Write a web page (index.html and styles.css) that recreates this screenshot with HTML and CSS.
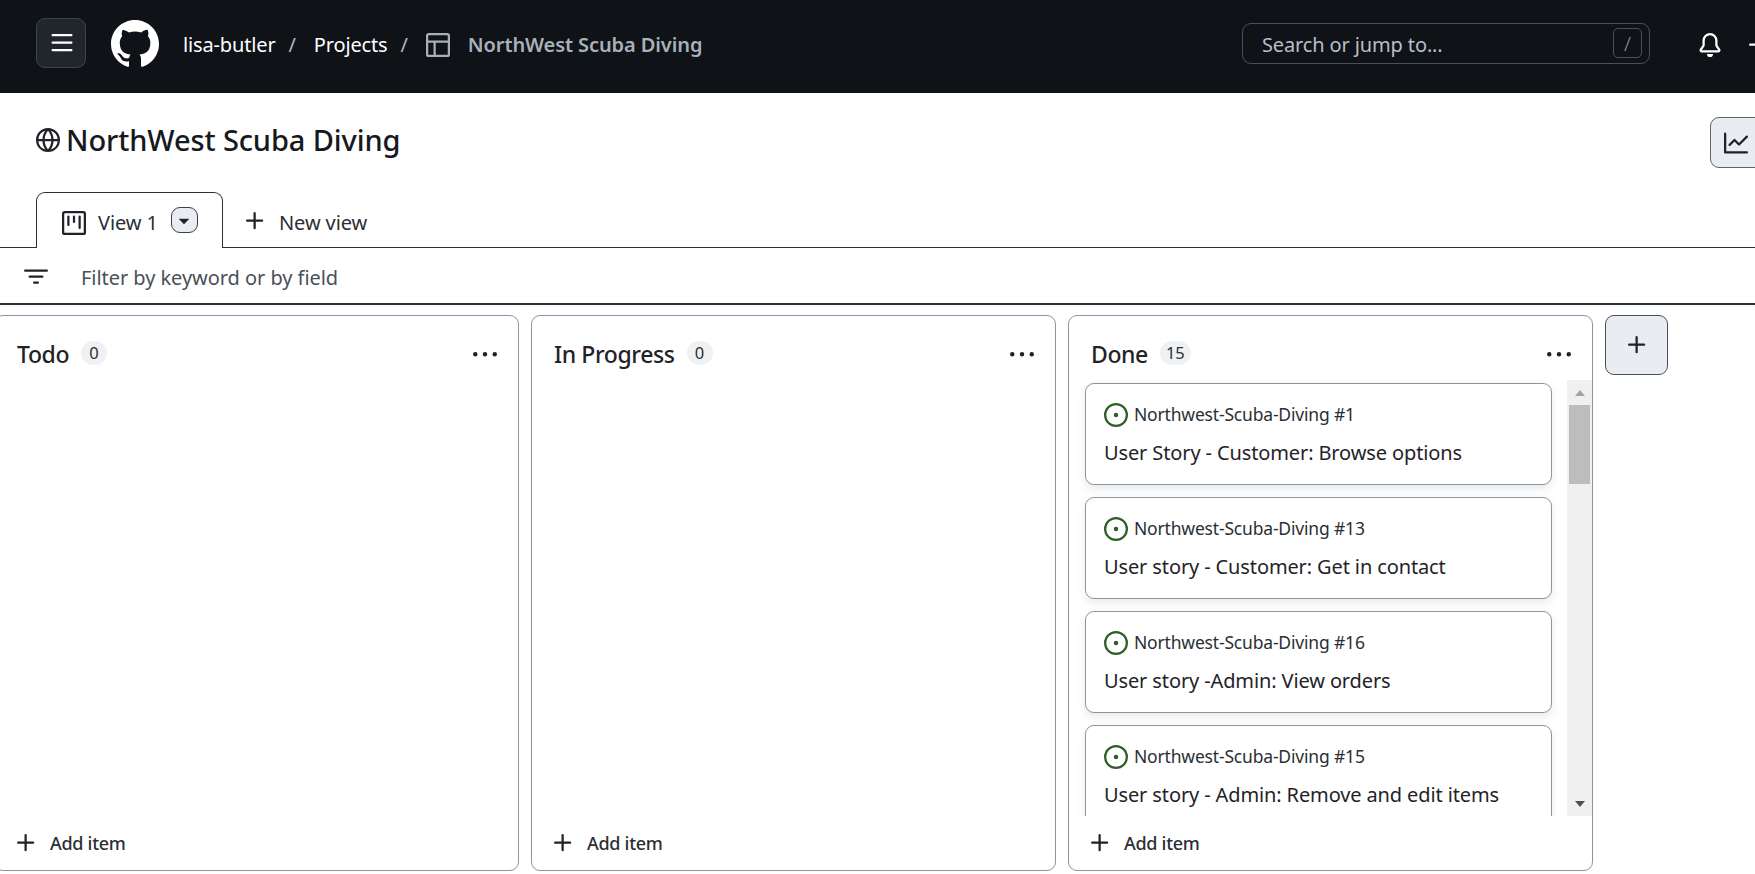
FILE: index.html
```html
<!DOCTYPE html>
<html lang="en">
<head>
<meta charset="utf-8">
<title>NorthWest Scuba Diving</title>
<link rel="stylesheet" href="styles.css">
</head>
<body>
<header class="topnav">
  <button class="menu-btn"><svg class="i24" viewBox="0 0 16 16"><path d="M1 2.75A.75.75 0 0 1 1.75 2h12.5a.75.75 0 0 1 0 1.5H1.75A.75.75 0 0 1 1 2.75Zm0 5A.75.75 0 0 1 1.75 7h12.5a.75.75 0 0 1 0 1.5H1.75A.75.75 0 0 1 1 7.75ZM1.75 12h12.5a.75.75 0 0 1 0 1.5H1.75a.75.75 0 0 1 0-1.5Z"/></svg></button>
  <svg class="logo" viewBox="0 0 16 16"><path d="M8 0c4.42 0 8 3.58 8 8a8.013 8.013 0 0 1-5.45 7.59c-.4.08-.55-.17-.55-.38 0-.27.01-1.13.01-2.2 0-.75-.25-1.23-.54-1.48 1.78-.2 3.65-.88 3.65-3.95 0-.88-.31-1.59-.82-2.15.08-.2.36-1.02-.08-2.12 0 0-.67-.22-2.2.82-.64-.18-1.32-.27-2-.27-.68 0-1.36.09-2 .27-1.53-1.03-2.2-.82-2.2-.82-.44 1.1-.16 1.92-.08 2.12-.51.56-.82 1.28-.82 2.15 0 3.06 1.86 3.75 3.64 3.95-.23.2-.44.55-.51 1.07-.46.21-1.61.55-2.33-.66-.15-.24-.6-.83-1.23-.82-.67.01-.27.38.01.53.34.19.73.9.82 1.13.16.45.68 1.31 2.69.94 0 .67.01 1.3.01 1.49 0 .21-.15.45-.55.38A7.995 7.995 0 0 1 0 8c0-4.42 3.58-8 8-8Z"/></svg>
  <nav class="crumbs">
    <span class="crumb">lisa-butler</span>
    <span class="slash">/</span>
    <span class="crumb">Projects</span>
    <span class="slash">/</span>
    <svg class="i24 table-icon" viewBox="0 0 16 16"><path d="M0 1.75C0 .784.784 0 1.75 0h12.5C15.216 0 16 .784 16 1.75v12.5A1.75 1.75 0 0 1 14.25 16H1.75A1.75 1.75 0 0 1 0 14.25ZM6.5 6.5v8h7.75a.25.25 0 0 0 .25-.25V6.5Zm8-1.5V1.75a.25.25 0 0 0-.25-.25H1.75a.25.25 0 0 0-.25.25V5Zm-13 1.5v7.75c0 .138.112.25.25.25H5v-8Z"/></svg>
    <span class="crumb current">NorthWest Scuba Diving</span>
  </nav>
  <div class="search"><span class="search-text">Search or jump to...</span><kbd class="key">/</kbd></div>
  <svg class="i24 bell" viewBox="0 0 16 16"><path d="M8 16a2 2 0 0 0 1.985-1.75c.017-.137-.097-.25-.235-.25h-3.5c-.138 0-.252.113-.235.25A2 2 0 0 0 8 16ZM3 5a5 5 0 0 1 10 0v2.947c0 .05.015.098.042.139l1.703 2.555A1.519 1.519 0 0 1 13.482 13H2.518a1.516 1.516 0 0 1-1.263-2.36l1.703-2.554A.255.255 0 0 0 3 7.947Zm5-3.5A3.5 3.5 0 0 0 4.5 5v2.947c0 .346-.102.683-.294.97l-1.703 2.556a.017.017 0 0 0-.003.01l.001.006c0 .002.002.004.004.006l.006.004.007.001h10.964l.007-.001.006-.004.004-.006.001-.007a.017.017 0 0 0-.003-.01l-1.703-2.554a1.745 1.745 0 0 1-.294-.97V5A3.5 3.5 0 0 0 8 1.5Z"/></svg>
  <svg class="i24 nav-plus" viewBox="0 0 16 16"><path d="M7.75 2a.75.75 0 0 1 .75.75V7h4.25a.75.75 0 0 1 0 1.5H8.5v4.25a.75.75 0 0 1-1.5 0V8.5H2.75a.75.75 0 0 1 0-1.5H7V2.75A.75.75 0 0 1 7.75 2Z"/></svg>
</header>

<section class="project-head">
  <svg class="i24" viewBox="0 0 16 16"><path d="M8 0a8 8 0 1 1 0 16A8 8 0 0 1 8 0ZM5.78 8.75a9.64 9.64 0 0 0 1.363 4.177c.255.426.542.832.857 1.215.245-.296.551-.705.857-1.215A9.64 9.64 0 0 0 10.22 8.75Zm4.44-1.5a9.64 9.64 0 0 0-1.363-4.177c-.307-.51-.612-.919-.857-1.215a9.927 9.927 0 0 0-.857 1.215A9.64 9.64 0 0 0 5.78 7.25Zm-5.944 1.5H1.543a6.507 6.507 0 0 0 4.666 5.5c-.123-.181-.24-.365-.352-.552-.715-1.192-1.437-2.874-1.581-4.948Zm-2.733-1.5h2.733c.144-2.074.866-3.756 1.58-4.948.12-.197.237-.381.353-.552a6.507 6.507 0 0 0-4.666 5.5Zm10.181 1.5c-.144 2.074-.866 3.756-1.58 4.948-.12.197-.237.381-.353.552a6.507 6.507 0 0 0 4.666-5.5Zm2.733-1.5a6.507 6.507 0 0 0-4.666-5.5c.123.181.24.365.353.552.714 1.192 1.436 2.874 1.58 4.948Z"/></svg>
  <h1 class="title">NorthWest Scuba Diving</h1>
  <button class="chart-btn"><svg class="i24" viewBox="0 0 16 16"><path d="M1.5 1.75V13.5h13.75a.75.75 0 0 1 0 1.5H.75a.75.75 0 0 1-.75-.75V1.75a.75.75 0 0 1 1.5 0Zm14.28 2.53-5.25 5.25a.75.75 0 0 1-1.06 0L7 7.06 4.28 9.78a.751.751 0 0 1-1.042-.018.751.751 0 0 1-.018-1.042l3.25-3.25a.75.75 0 0 1 1.06 0L10 7.94l4.72-4.72a.751.751 0 0 1 1.042.018.751.751 0 0 1 .018 1.042Z"/></svg></button>
</section>

<div class="tabs">
  <div class="tab">
    <svg class="i24" viewBox="0 0 16 16"><path d="M1.75 0h12.5C15.216 0 16 .784 16 1.75v12.5A1.75 1.75 0 0 1 14.25 16H1.75A1.75 1.75 0 0 1 0 14.25V1.75C0 .784.784 0 1.75 0ZM1.5 1.75v12.5c0 .138.112.25.25.25h12.5a.25.25 0 0 0 .25-.25V1.75a.25.25 0 0 0-.25-.25H1.75a.25.25 0 0 0-.25.25ZM11.75 3a.75.75 0 0 1 .75.75v7.5a.75.75 0 0 1-1.5 0v-7.5a.75.75 0 0 1 .75-.75Zm-8.25.75a.75.75 0 0 1 1.5 0v5.5a.75.75 0 0 1-1.5 0ZM8 3a.75.75 0 0 1 .75.75v3.5a.75.75 0 0 1-1.5 0v-3.5A.75.75 0 0 1 8 3Z"/></svg>
    <span class="tab-label">View 1</span>
    <span class="tab-caret"><svg class="i22" viewBox="0 0 16 16"><path d="m4.427 7.427 3.396 3.396a.25.25 0 0 0 .354 0l3.396-3.396A.25.25 0 0 0 11.396 7H4.604a.25.25 0 0 0-.177.427Z"/></svg></span>
  </div>
  <div class="new-view">
    <svg class="i24" viewBox="0 0 16 16"><path d="M7.75 2a.75.75 0 0 1 .75.75V7h4.25a.75.75 0 0 1 0 1.5H8.5v4.25a.75.75 0 0 1-1.5 0V8.5H2.75a.75.75 0 0 1 0-1.5H7V2.75A.75.75 0 0 1 7.75 2Z"/></svg>
    <span class="tab-label">New view</span>
  </div>
</div>

<div class="filter">
  <svg class="i24" viewBox="0 0 16 16"><path d="M.75 3h14.5a.75.75 0 0 1 0 1.5H.75a.75.75 0 0 1 0-1.5ZM3 7.75A.75.75 0 0 1 3.75 7h8.5a.75.75 0 0 1 0 1.5h-8.5A.75.75 0 0 1 3 7.75Zm3 4a.75.75 0 0 1 .75-.75h2.5a.75.75 0 0 1 0 1.5h-2.5a.75.75 0 0 1-.75-.75Z"/></svg>
  <span class="filter-text">Filter by keyword or by field</span>
</div>

<main class="board">
  <section class="column">
    <div class="col-head"><h2 class="col-title">Todo</h2><span class="count">0</span>
      <svg class="i24 kebab" viewBox="0 0 16 16"><path d="M8 9a1.5 1.5 0 1 0 0-3 1.5 1.5 0 0 0 0 3ZM1.5 9a1.5 1.5 0 1 0 0-3 1.5 1.5 0 0 0 0 3Zm13 0a1.5 1.5 0 1 0 0-3 1.5 1.5 0 0 0 0 3Z"/></svg></div>
    <div class="col-body"></div>
    <div class="add-item"><svg class="i24" viewBox="0 0 16 16"><path d="M7.75 2a.75.75 0 0 1 .75.75V7h4.25a.75.75 0 0 1 0 1.5H8.5v4.25a.75.75 0 0 1-1.5 0V8.5H2.75a.75.75 0 0 1 0-1.5H7V2.75A.75.75 0 0 1 7.75 2Z"/></svg><span class="add-label">Add item</span></div>
  </section>
  <section class="column">
    <div class="col-head"><h2 class="col-title">In Progress</h2><span class="count">0</span>
      <svg class="i24 kebab" viewBox="0 0 16 16"><path d="M8 9a1.5 1.5 0 1 0 0-3 1.5 1.5 0 0 0 0 3ZM1.5 9a1.5 1.5 0 1 0 0-3 1.5 1.5 0 0 0 0 3Zm13 0a1.5 1.5 0 1 0 0-3 1.5 1.5 0 0 0 0 3Z"/></svg></div>
    <div class="col-body"></div>
    <div class="add-item"><svg class="i24" viewBox="0 0 16 16"><path d="M7.75 2a.75.75 0 0 1 .75.75V7h4.25a.75.75 0 0 1 0 1.5H8.5v4.25a.75.75 0 0 1-1.5 0V8.5H2.75a.75.75 0 0 1 0-1.5H7V2.75A.75.75 0 0 1 7.75 2Z"/></svg><span class="add-label">Add item</span></div>
  </section>
  <section class="column">
    <div class="col-head"><h2 class="col-title">Done</h2><span class="count">15</span>
      <svg class="i24 kebab" viewBox="0 0 16 16"><path d="M8 9a1.5 1.5 0 1 0 0-3 1.5 1.5 0 0 0 0 3ZM1.5 9a1.5 1.5 0 1 0 0-3 1.5 1.5 0 0 0 0 3Zm13 0a1.5 1.5 0 1 0 0-3 1.5 1.5 0 0 0 0 3Z"/></svg></div>
    <div class="col-body done-body">
      <div class="cards">
        <article class="card"><div class="card-meta"><svg class="i24 issue" viewBox="0 0 16 16"><path d="M8 9.5a1.5 1.5 0 1 0 0-3 1.5 1.5 0 0 0 0 3Z"/><path d="M8 0a8 8 0 1 1 0 16A8 8 0 0 1 8 0ZM1.5 8a6.5 6.5 0 1 0 13 0 6.5 6.5 0 0 0-13 0Z"/></svg><span class="meta-text">Northwest-Scuba-Diving #1</span></div><p class="card-title">User Story - Customer: Browse options</p></article>
        <article class="card"><div class="card-meta"><svg class="i24 issue" viewBox="0 0 16 16"><path d="M8 9.5a1.5 1.5 0 1 0 0-3 1.5 1.5 0 0 0 0 3Z"/><path d="M8 0a8 8 0 1 1 0 16A8 8 0 0 1 8 0ZM1.5 8a6.5 6.5 0 1 0 13 0 6.5 6.5 0 0 0-13 0Z"/></svg><span class="meta-text">Northwest-Scuba-Diving #13</span></div><p class="card-title">User story - Customer: Get in contact</p></article>
        <article class="card"><div class="card-meta"><svg class="i24 issue" viewBox="0 0 16 16"><path d="M8 9.5a1.5 1.5 0 1 0 0-3 1.5 1.5 0 0 0 0 3Z"/><path d="M8 0a8 8 0 1 1 0 16A8 8 0 0 1 8 0ZM1.5 8a6.5 6.5 0 1 0 13 0 6.5 6.5 0 0 0-13 0Z"/></svg><span class="meta-text">Northwest-Scuba-Diving #16</span></div><p class="card-title">User story -Admin: View orders</p></article>
        <article class="card"><div class="card-meta"><svg class="i24 issue" viewBox="0 0 16 16"><path d="M8 9.5a1.5 1.5 0 1 0 0-3 1.5 1.5 0 0 0 0 3Z"/><path d="M8 0a8 8 0 1 1 0 16A8 8 0 0 1 8 0ZM1.5 8a6.5 6.5 0 1 0 13 0 6.5 6.5 0 0 0-13 0Z"/></svg><span class="meta-text">Northwest-Scuba-Diving #15</span></div><p class="card-title">User story - Admin: Remove and edit items</p></article>
      </div>
      <div class="scrollbar">
        <span class="arrow up"></span>
        <span class="thumb"></span>
        <span class="track-space"></span>
        <span class="arrow down"></span>
      </div>
    </div>
    <div class="add-item"><svg class="i24" viewBox="0 0 16 16"><path d="M7.75 2a.75.75 0 0 1 .75.75V7h4.25a.75.75 0 0 1 0 1.5H8.5v4.25a.75.75 0 0 1-1.5 0V8.5H2.75a.75.75 0 0 1 0-1.5H7V2.75A.75.75 0 0 1 7.75 2Z"/></svg><span class="add-label">Add item</span></div>
  </section>
  <button class="add-col"><svg class="i24" viewBox="0 0 16 16"><path d="M7.75 2a.75.75 0 0 1 .75.75V7h4.25a.75.75 0 0 1 0 1.5H8.5v4.25a.75.75 0 0 1-1.5 0V8.5H2.75a.75.75 0 0 1 0-1.5H7V2.75A.75.75 0 0 1 7.75 2Z"/></svg></button>
</main>
</body>
</html>
```

FILE: styles.css
```css
* { box-sizing: border-box; }
html, body { height: 100%; }
body {
  margin: 0;
  width: 1755px;
  height: 874px;
  overflow: hidden;
  background: #fff;
  color: #1f2328;
  font-family: "Noto Sans", "Open Sans", sans-serif;
}
svg { display: block; fill: currentColor; flex: none; }
.i24 { width: 24px; height: 24px; }
.i22 { width: 22px; height: 22px; }
button { padding: 0; font: inherit; color: inherit; }

.topnav {
  height: 93px;
  background: #0f1217;
  color: #fff;
  display: flex;
  align-items: center;
  padding: 0 0 7px 36px;
}
.topnav > * { flex: none; }
.menu-btn {
  width: 50px;
  height: 50px;
  display: flex;
  align-items: center;
  justify-content: center;
  padding-left: 2px;
  background: #21262d;
  border: 1px solid #3d444d;
  border-radius: 9px;
  color: #fff;
}
.logo { width: 48px; height: 48px; margin: 1px 0 0 25px; }
.crumbs {
  display: flex;
  align-items: center;
  margin-left: 24px;
  width: 1059px;
  padding-top: 3px;
  font-size: 20px;
  letter-spacing: -.15px;
  white-space: nowrap;
}
.slash { color: #b4b9bf; margin: 0 18px 0 13px; }
.table-icon { color: #a8b0b8; margin-right: 18px; }
.crumb.current { color: #a8b0b8; font-weight: 600; letter-spacing: -.1px; }
.search {
  width: 408px;
  height: 41px;
  border: 1px solid #4a5058;
  border-radius: 9px;
  display: flex;
  align-items: center;
  justify-content: space-between;
  padding: 0 7px 0 19px;
}
.search-text { color: #b8bfc6; font-size: 20px; letter-spacing: -.13px; padding-top: 3px; }
.key {
  width: 29px;
  height: 30px;
  border: 1px solid #4a5058;
  border-radius: 5px;
  display: flex;
  align-items: center;
  justify-content: center;
  color: #8b949e;
  font-family: "Noto Sans", sans-serif;
  font-size: 20px;
  font-weight: 300;
}
.bell { margin: 4px 0 0 48px; }
.nav-plus { margin: 4px 0 0 24px; }

.project-head {
  height: 99px;
  display: flex;
  align-items: flex-start;
  padding: 24px 0 0 36px;
  position: relative;
}
.project-head > .i24 { margin-top: 11px; }
.title {
  margin: 0 0 0 6px;
  font-size: 29px;
  line-height: 46px;
  font-weight: 500;
  letter-spacing: -.1px;
  color: #16191d;
  white-space: nowrap;
}
.chart-btn {
  position: absolute;
  left: 1710px;
  top: 24px;
  width: 80px;
  height: 51px;
  background: #e9edf1;
  border: 1px solid #5b636c;
  border-radius: 9px;
  display: flex;
  align-items: center;
  padding-left: 13px;
}

.tabs {
  height: 56px;
  display: flex;
  align-items: flex-end;
  padding-left: 36px;
  border-bottom: 1px solid #2b3036;
}
.tab {
  width: 187px;
  height: 56px;
  margin-bottom: -1px;
  background: #fff;
  border: 1px solid #2b3036;
  border-bottom: 0;
  border-radius: 9px 9px 0 0;
  display: flex;
  align-items: center;
  padding: 4px 0 0 25px;
}
.tab-label { font-size: 20px; letter-spacing: -.1px; margin-left: 12px; color: #2a2f35; white-space: nowrap; }
.tab-caret {
  width: 27px;
  height: 26px;
  margin: -6px 0 0 13px;
  background: #e9edf1;
  border: 1px solid #3a4047;
  border-radius: 9px;
  display: flex;
  align-items: center;
  justify-content: center;
}
.new-view {
  height: 56px;
  display: flex;
  align-items: center;
  padding: 4px 0 0 20px;
}
.new-view .tab-label { margin: 2px 0 0 12px; }

.filter {
  height: 57px;
  display: flex;
  align-items: center;
  padding: 3px 0 0 24px;
  border-bottom: 2px solid #2b3036;
}
.filter-text { margin-left: 33px; font-size: 20px; letter-spacing: -.05px; color: #4a5058; white-space: nowrap; }

.board {
  height: 571px;
  display: flex;
  align-items: flex-start;
  gap: 12px;
  padding: 10px 0 3px;
  margin-left: -6px;
  width: 1800px;
  background: linear-gradient(#f6f8fa, #fff 6px);
}
.column {
  width: 525px;
  height: 556px;
  flex: none;
  background: #fff;
  border: 1px solid #8c959f;
  border-radius: 9px;
  display: flex;
  flex-direction: column;
}
.col-head {
  height: 64px;
  display: flex;
  align-items: center;
  padding: 11px 21px 0 22px;
  flex: none;
}
.col-title { margin: 0; font-size: 23px; font-weight: 500; letter-spacing: -.4px; color: #1f2328; }
.count {
  min-width: 26px;
  height: 24px;
  margin: -2px 0 0 12px;
  padding: 0 6px;
  border-radius: 12px;
  background: #eff1f3;
  font-size: 16.5px;
  line-height: 24px;
  text-align: center;
  color: #2a2f35;
}
.kebab { margin: 2px 0 0 auto; }
.col-body { flex: 1; min-height: 0; }
.done-body {
  display: flex;
  overflow: hidden;
  padding-left: 16px;
}
.cards {
  width: 467px;
  display: flex;
  flex-direction: column;
  gap: 12px;
  padding-top: 3px;
}
.card {
  height: 102px;
  flex: none;
  background: #fff;
  border: 1px solid #8c959f;
  border-radius: 9px;
  box-shadow: 0 4px 8px rgba(140, 149, 159, .2);
  padding: 19px 0 0 18px;
}
.card-meta { display: flex; align-items: center; height: 24px; }
.issue { color: #2d6026; }
.meta-text { margin: -2px 0 0 6px; font-size: 17.5px; letter-spacing: -.18px; color: #2a2f35; white-space: nowrap; }
.card-title { margin: 12px 0 0; font-size: 20px; line-height: 28px; letter-spacing: -.12px; color: #1f2328; white-space: nowrap; }
.scrollbar {
  width: 25px;
  margin-left: 15px;
  background: #f0f0f0;
  display: flex;
  flex-direction: column;
  align-items: center;
}
.arrow { width: 0; height: 0; border-left: 5px solid transparent; border-right: 5px solid transparent; flex: none; }
.arrow.up { margin-top: 10px; border-bottom: 6px solid #a3a3a3; }
.thumb { width: 21px; height: 79px; background: #bdbdbd; margin-top: 9px; flex: none; }
.track-space { flex: 1; }
.arrow.down { margin-bottom: 9px; border-top: 6px solid #505050; }
.add-item {
  height: 54px;
  flex: none;
  display: flex;
  align-items: center;
  padding-left: 19px;
  border-radius: 0 0 9px 9px;
}
.add-label { margin-left: 12px; font-size: 18px; font-weight: 500; letter-spacing: -.3px; color: #2a2f35; }
.add-col {
  width: 63px;
  height: 60px;
  flex: none;
  background: #e9edf1;
  border: 1px solid #4a5058;
  border-radius: 9px;
  display: flex;
  align-items: center;
  justify-content: center;
  color: #1f2328;
}
```
